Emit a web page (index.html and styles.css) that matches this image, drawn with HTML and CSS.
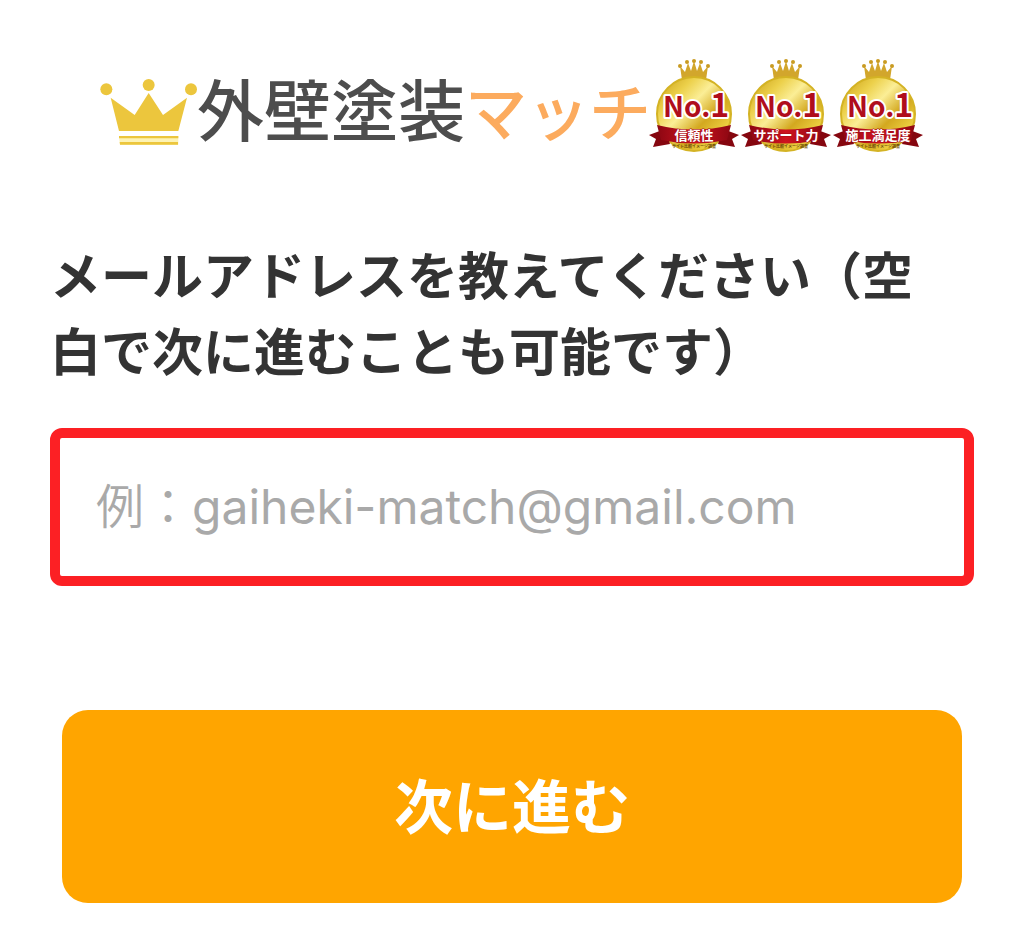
FILE: index.html
```
<!DOCTYPE html>
<html lang="ja">

<head>
    <meta charset="UTF-8">
    <meta name="viewport" content="width=device-width, initial-scale=1">
    <title>外壁塗装マッチ</title>
    <link rel="stylesheet" href="styles.css">
</head>

<body>
    <header class="header">
        <div class="logo">
            <svg class="logo_crown" viewBox="30 84 291 204" aria-hidden="true">
                <g fill="#ecc63d">
                    <circle cx="49" cy="118" r="18" />
                    <circle cx="176" cy="105" r="18" />
                    <circle cx="303" cy="118" r="18" />
                    <path d="M62 143L134 195L176 129L219 195L291 143L265 243H87Z" />
                </g>
                <path fill="#fdf3b4" d="M87 258H265V284H90Z" />
                <path fill="#ecc63d" d="M87 258H265V265H87ZM89 276H264V284H90Z" />
            </svg>
            <span class="logo_text">外壁塗装<span class="logo_match">マッチ</span></span>
        </div>
        <!-- No.1 バッジ -->
        <svg class="badge" viewBox="0 0 92 96" role="img" aria-label="No.1 信頼性">
            <defs>
                <linearGradient id="gold" x1="0" y1="0" x2="1" y2="1">
                    <stop offset="0" stop-color="#c69a12" />
                    <stop offset=".25" stop-color="#ecd04a" />
                    <stop offset=".42" stop-color="#fbee96" />
                    <stop offset=".62" stop-color="#d3a81f" />
                    <stop offset=".8" stop-color="#ecce40" />
                    <stop offset="1" stop-color="#a87808" />
                </linearGradient>
                <linearGradient id="ribbon" x1="0" y1="0" x2="1" y2="0">
                    <stop offset="0" stop-color="#8c0712" />
                    <stop offset=".5" stop-color="#cf1220" />
                    <stop offset="1" stop-color="#8c0712" />
                </linearGradient>
                <g id="medal">
                    <path fill="#d2a62c" d="M34 22L32 8L37 14L40 5L43 13L46 3L49 13L52 5L55 14L60 8L58 22Q46 18 34 22Z" />
                    <g fill="#c99b22">
                        <circle cx="32" cy="8" r="2" />
                        <circle cx="39" cy="4" r="2" />
                        <circle cx="46" cy="3" r="2" />
                        <circle cx="53" cy="4" r="2" />
                        <circle cx="60" cy="8" r="2" />
                    </g>
                    <circle cx="46" cy="56" r="37" fill="url(#gold)" stroke="#d4b324" stroke-width="2" />
                    <path fill="#85060f" d="M17 71L1 77L8 81L5 89L22 86ZM75 71L91 77L84 81L87 89L70 86Z" />
                    <path fill="url(#ribbon)" d="M9 67Q46 76 83 67L79 82Q46 89 13 82Z" />
                </g>
            </defs>
            <use href="#medal" />
            <text class="badge_no" x="15" y="59">No.<tspan class="badge_one">1</tspan></text>
            <text class="badge_label" x="46" y="82">信頼性</text>
            <text class="badge_note" x="46" y="90">サイト比較イメージ調査</text>
        </svg>
        <svg class="badge" viewBox="0 0 92 96" role="img" aria-label="No.1 サポート力">
            <use href="#medal" />
            <text class="badge_no" x="15" y="59">No.<tspan class="badge_one">1</tspan></text>
            <text class="badge_label" x="46" y="82">サポート力</text>
            <text class="badge_note" x="46" y="90">サイト比較イメージ調査</text>
        </svg>
        <svg class="badge" viewBox="0 0 92 96" role="img" aria-label="No.1 施工満足度">
            <use href="#medal" />
            <text class="badge_no" x="15" y="59">No.<tspan class="badge_one">1</tspan></text>
            <text class="badge_label" x="46" y="82">施工満足度</text>
            <text class="badge_note" x="46" y="90">サイト比較イメージ調査</text>
        </svg>
    </header>
    <form class="form">
        <label class="form_title" for="email">メールアドレスを教えてください（空白で次に進むことも可能です）</label>
        <input class="form_input" type="email" id="email" name="email" placeholder="例：gaiheki-match@gmail.com">
        <button class="form_btn" type="submit">次に進む</button>
    </form>
</body>

</html>
```
FILE: styles.css
```
* {
    box-sizing: border-box;
}

body {
    margin: 0;
    padding: 58px 50px 32px;
    background-color: #fff;
    color: #333;
    font-family: "Noto Sans CJK JP", sans-serif;
}

/* ロゴとバッジ */
.header {
    display: flex;
    justify-content: center;
    align-items: center;
}

.logo {
    display: flex;
    align-items: center;
    margin-right: -3px;
}

.logo_crown {
    width: 97px;
    height: 68px;
    margin-top: 12px;
}

.logo_text {
    margin-top: 4px;
    color: #4d4d4d;
    font-size: 67px;
    font-weight: 500;
    line-height: 84px;
    white-space: nowrap;
}

.logo_match {
    color: #fcab5e;
    font-size: 62px;
}

.badge {
    flex: none;
    width: 92px;
    height: 96px;
}

.badge text {
    font-weight: 700;
    stroke-linejoin: round;
    paint-order: stroke;
}

.badge .badge_no {
    fill: #b00d1c;
    stroke: #fff;
    stroke-width: 4px;
    font-size: 28px;
}

.badge .badge_one {
    font-size: 32px;
}

.badge .badge_label {
    fill: #fff;
    stroke: #a80d18;
    stroke-width: 1px;
    font-size: 13px;
    text-anchor: middle;
}

.badge .badge_note {
    fill: #6b4a08;
    font-size: 4px;
    text-anchor: middle;
}

/* 入力フォーム */
.form {
    display: flex;
    flex-direction: column;
    margin-top: 81px;
}

.form_title {
    padding-right: 24px;
    font-size: 51px;
    font-weight: 600;
    line-height: 76px;
}

.form_input {
    width: 100%;
    margin-top: 41px;
    padding: 38px 36px;
    border: 10px solid #fc2024;
    border-radius: 12px;
    background-color: #fff;
    color: #333;
    font-family: Inter, "Noto Sans CJK JP DemiLight", "Noto Sans CJK JP", sans-serif;
    font-size: 48px;
    line-height: 62px;
}

.form_input::placeholder {
    color: #a9a9a9;
    opacity: 1;
}

.form_btn {
    margin: 124px 12px 0;
    padding: 49px 24px 55px;
    border: 0;
    border-radius: 26px;
    background-color: #ffa500;
    color: #fff;
    font-family: inherit;
    font-size: 59px;
    font-weight: 600;
    line-height: 89px;
}
```
